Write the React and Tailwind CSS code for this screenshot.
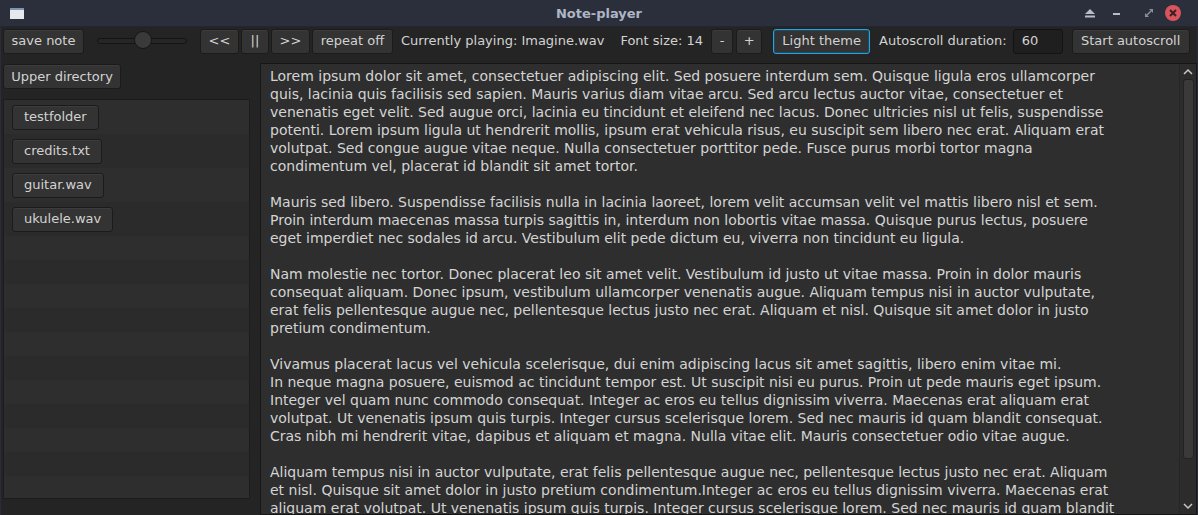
import React from "react";

const paragraphs = [
  [
    "Lorem ipsum dolor sit amet, consectetuer adipiscing elit. Sed posuere interdum sem. Quisque ligula eros ullamcorper",
    "quis, lacinia quis facilisis sed sapien. Mauris varius diam vitae arcu. Sed arcu lectus auctor vitae, consectetuer et",
    "venenatis eget velit. Sed augue orci, lacinia eu tincidunt et eleifend nec lacus. Donec ultricies nisl ut felis, suspendisse",
    "potenti. Lorem ipsum ligula ut hendrerit mollis, ipsum erat vehicula risus, eu suscipit sem libero nec erat. Aliquam erat",
    "volutpat. Sed congue augue vitae neque. Nulla consectetuer porttitor pede. Fusce purus morbi tortor magna",
    "condimentum vel, placerat id blandit sit amet tortor.",
  ],
  [
    "Mauris sed libero. Suspendisse facilisis nulla in lacinia laoreet, lorem velit accumsan velit vel mattis libero nisl et sem.",
    "Proin interdum maecenas massa turpis sagittis in, interdum non lobortis vitae massa. Quisque purus lectus, posuere",
    "eget imperdiet nec sodales id arcu. Vestibulum elit pede dictum eu, viverra non tincidunt eu ligula.",
  ],
  [
    "Nam molestie nec tortor. Donec placerat leo sit amet velit. Vestibulum id justo ut vitae massa. Proin in dolor mauris",
    "consequat aliquam. Donec ipsum, vestibulum ullamcorper venenatis augue. Aliquam tempus nisi in auctor vulputate,",
    "erat felis pellentesque augue nec, pellentesque lectus justo nec erat. Aliquam et nisl. Quisque sit amet dolor in justo",
    "pretium condimentum.",
  ],
  [
    "Vivamus placerat lacus vel vehicula scelerisque, dui enim adipiscing lacus sit amet sagittis, libero enim vitae mi.",
    "In neque magna posuere, euismod ac tincidunt tempor est. Ut suscipit nisi eu purus. Proin ut pede mauris eget ipsum.",
    "Integer vel quam nunc commodo consequat. Integer ac eros eu tellus dignissim viverra. Maecenas erat aliquam erat",
    "volutpat. Ut venenatis ipsum quis turpis. Integer cursus scelerisque lorem. Sed nec mauris id quam blandit consequat.",
    "Cras nibh mi hendrerit vitae, dapibus et aliquam et magna. Nulla vitae elit. Mauris consectetuer odio vitae augue.",
  ],
  [
    "Aliquam tempus nisi in auctor vulputate, erat felis pellentesque augue nec, pellentesque lectus justo nec erat. Aliquam",
    "et nisl. Quisque sit amet dolor in justo pretium condimentum.Integer ac eros eu tellus dignissim viverra. Maecenas erat",
    "aliquam erat volutpat. Ut venenatis ipsum quis turpis. Integer cursus scelerisque lorem. Sed nec mauris id quam blandit",
  ],
];

function Btn({ children, className = "", focused = false }) {
  return (
    <div
      className={
        "h-[25px] flex items-center justify-center rounded-[3px] border bg-[#333333] text-[#d2d2d2] " +
        (focused
          ? "border-[#2aa3dc] shadow-[inset_0_0_0_1px_#1a4c66] "
          : "border-[#1b1b1b] shadow-[inset_0_1px_0_#3c3c3c] ") +
        className
      }
    >
      {children}
    </div>
  );
}

export default function App() {
  const rows = [];
  for (let i = 0; i < 11; i++) rows.push(i);
  return (
    <div
      className="w-[1198px] h-[515px] overflow-hidden bg-[#2a2d39] flex flex-col text-[13px] text-[#d2d2d2]"
      style={{ fontFamily: '"DejaVu Sans", sans-serif' }}
    >
      {/* title bar */}
      <div className="h-[27px] shrink-0 flex items-center relative bg-[#2b2e3b] border-b border-[#23252f]">
        <div className="ml-[10px] w-[14px] h-[11px] bg-[#e6e8ec] border-t-[2px] border-[#7b94b8]" />
        <div className="absolute left-0 right-0 top-0 h-[27px] flex items-center justify-center font-bold text-[13px] text-[#aeb6c6] pointer-events-none">
          Note-player
        </div>
        <div className="ml-auto flex items-center mr-[17px]">
          <svg width="10" height="9" viewBox="0 0 10 9">
            <polygon points="5,0 10,5 0,5" fill="#b6bccb" />
            <rect x="0" y="6.5" width="10" height="2" fill="#b6bccb" />
          </svg>
          <div className="ml-[18px] w-[7px] h-[2px] bg-[#b6bccb] mt-[2px]" />
          <svg width="8" height="8" viewBox="0 0 8 8" className="ml-[25px]">
            <polygon points="4,0 8,0 8,4" fill="#8a90a0" />
            <polygon points="0,4 0,8 4,8" fill="#8a90a0" />
            <line x1="2" y1="6" x2="6" y2="2" stroke="#8a90a0" strokeWidth="1.5" />
          </svg>
          <div className="ml-[12px] w-[16px] h-[16px] rounded-full bg-[#d9545d] flex items-center justify-center">
            <svg width="8" height="8" viewBox="0 0 8 8">
              <line x1="1" y1="1" x2="7" y2="7" stroke="#3a1f24" strokeWidth="2" />
              <line x1="7" y1="1" x2="1" y2="7" stroke="#3a1f24" strokeWidth="2" />
            </svg>
          </div>
        </div>
      </div>

      {/* body */}
      <div className="flex-1 flex flex-col bg-[#242424] border-x border-[#2a2d39] min-h-0">
        {/* toolbar */}
        <div className="h-[28px] shrink-0 flex items-center pl-[2px]">
          <Btn className="w-[81px]">save note</Btn>
          <div className="ml-[13px] w-[90px] h-[20px] relative flex items-center">
            <div className="w-full h-[6px] rounded-full bg-[#262626] border border-[#141414]" />
            <div className="absolute left-[37px] top-[0px] w-[18px] h-[18px] rounded-full bg-[#3a3a3a] border border-[#161616]" />
          </div>
          <Btn className="ml-[13px] w-[39px]">&lt;&lt;</Btn>
          <Btn className="ml-[2px] w-[28px]">||</Btn>
          <Btn className="ml-[2px] w-[39px]">&gt;&gt;</Btn>
          <Btn className="ml-[2px] w-[81px]">repeat off</Btn>
          <span className="ml-[8px]">Currently playing: Imagine.wav</span>
          <span className="ml-[16px]">Font size: 14</span>
          <Btn className="ml-[8px] w-[22px]">-</Btn>
          <Btn className="ml-[3px] w-[26px]">+</Btn>
          <Btn focused className="ml-[11px] w-[97px]">Light theme</Btn>
          <span className="ml-[9px]">Autoscroll duration:</span>
          <div className="ml-[6px] w-[50px] h-[25px] flex items-center pl-[8px] rounded-[3px] bg-[#1f1f1f] border border-[#131313]">
            60
          </div>
          <Btn className="ml-[9px] w-[118px]">Start autoscroll</Btn>
        </div>

        {/* main */}
        <div className="flex-1 flex min-h-0 mt-[9px]">
          {/* left column */}
          <div className="w-[247px] ml-[2px] shrink-0 flex flex-col">
            <Btn className="w-[118px]">Upper directory</Btn>
            <div className="mt-[10px] h-[400px] border border-[#1c1c1c] bg-[#2c2c2c] flex flex-col overflow-hidden">
              {["testfolder", "credits.txt", "guitar.wav", "ukulele.wav"].map((n, i) => (
                <div
                  key={n}
                  className={
                    "h-[34px] shrink-0 flex items-center pl-[8px] " +
                    (i % 2 === 0 ? "bg-[#2e2e2e]" : "bg-[#2b2b2b]")
                  }
                >
                  <Btn className="px-[8px] h-[24px] min-w-0">
                    <span className="px-[3px]">{n}</span>
                  </Btn>
                </div>
              ))}
              {rows.map((i) => (
                <div
                  key={i}
                  className={"h-[24px] shrink-0 " + (i % 2 === 0 ? "bg-[#2e2e2e]" : "bg-[#2b2b2b]")}
                />
              ))}
            </div>
          </div>

          {/* text area */}
          <div className="ml-[10px] flex-1 border border-[#161616] bg-[#2e2e2e] flex min-h-0 h-[452px] -mt-[1px]">
            <div className="flex-1 pl-[9px] pt-[3px] overflow-hidden text-[#d4d4d4] text-[14px] leading-[18px] whitespace-pre">
              {paragraphs.map((p, pi) => (
                <div key={pi} className={pi > 0 ? "mt-[18px]" : ""}>
                  {p.map((l, li) => (
                    <div key={li}>{l}</div>
                  ))}
                </div>
              ))}
            </div>
            <div className="w-[17px] shrink-0 border-l border-[#262626] bg-[#2c2c2c] flex flex-col items-center">
              <svg width="10" height="7" viewBox="0 0 10 7" className="mt-[4px]">
                <polyline points="1,6 5,2 9,6" fill="none" stroke="#c8c8c8" strokeWidth="1.5" />
              </svg>
              <div className="mt-[4px] w-[11px] h-[380px] rounded-[3px] bg-[#3a3a3a] border border-[#222]" />
              <svg width="10" height="7" viewBox="0 0 10 7" className="mt-auto mb-[4px]">
                <polyline points="1,1 5,5 9,1" fill="none" stroke="#c8c8c8" strokeWidth="1.5" />
              </svg>
            </div>
          </div>
        </div>
      </div>
    </div>
  );
}
